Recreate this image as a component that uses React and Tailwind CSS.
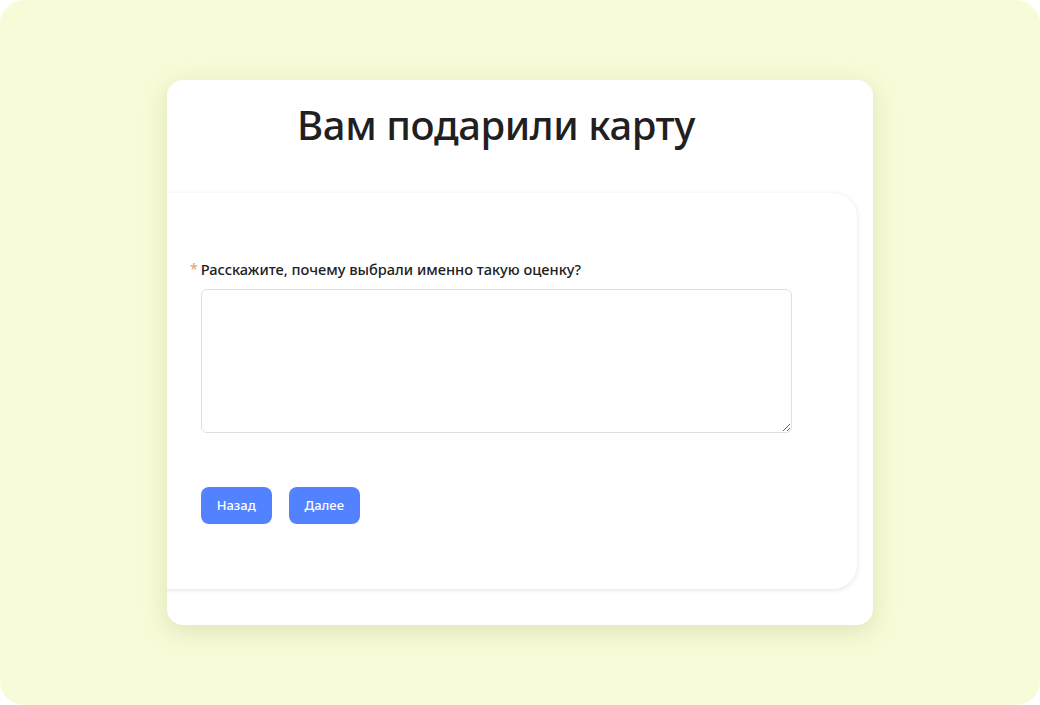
export default function App() {
  return (
    <div className="w-[1040px] h-[705px] bg-white" style={{ fontFamily: '"Noto Sans", Inter, sans-serif' }}>
      <div className="w-full h-full rounded-[24px] bg-[#f8fbd7] pt-[80px] pl-[167px]">
        <div className="w-[706px] h-[545px] rounded-2xl bg-white overflow-hidden shadow-[0_6px_24px_rgba(150,160,90,0.25)]">
          <div className="h-[113px] flex items-center justify-center pb-[24px] pr-[48px]">
            <h1 className="text-[40px] leading-none font-medium text-[#21201f] tracking-[-0.4px]">Вам подарили карту</h1>
          </div>
          <div className="-ml-6 mr-4 h-[396px] rounded-r-[24px] bg-white shadow-[0_1px_5px_rgba(0,0,0,0.12)] pl-[47px] pt-[66px]">
            <div className="flex items-start gap-[3px]">
              <span className="text-[14px] leading-5 text-[#e0a060]">*</span>
              <div className="flex flex-col">
                <label className="text-[14.6px] leading-5 font-medium text-[#21201f]">Расскажите, почему выбрали именно такую оценку?</label>
                <textarea className="mt-[10px] w-[591px] h-[144px] rounded-md border border-[#e0e0e0] outline-none p-2 text-sm"></textarea>
                <div className="mt-[54px] flex gap-[17px]">
                  <button className="w-[71px] h-[37px] rounded-lg bg-[#5282ff] text-white text-[13px] font-medium">Назад</button>
                  <button className="w-[71px] h-[37px] rounded-lg bg-[#5282ff] text-white text-[13px] font-medium">Далее</button>
                </div>
              </div>
            </div>
          </div>
        </div>
      </div>
    </div>
  );
}
